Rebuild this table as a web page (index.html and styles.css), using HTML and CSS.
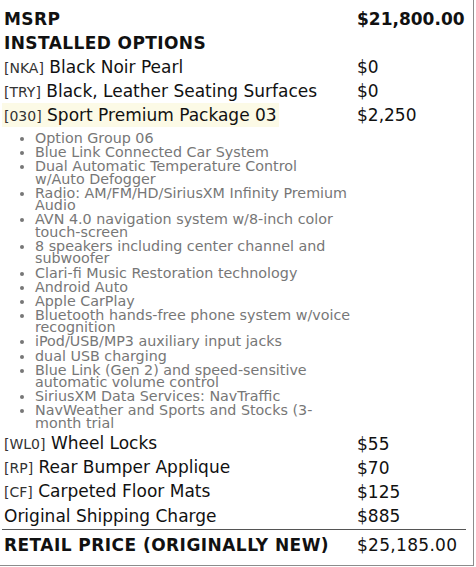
FILE: index.html
```html
<!DOCTYPE html>
<html>
<head>
<meta charset="utf-8">
<link rel="stylesheet" href="styles.css">
</head>
<body>
<div class="sheet">
  <div class="table">
    <div class="row strong"><div class="label">MSRP</div><div class="price">$21,800.00</div></div>
    <div class="row strong"><div class="label">INSTALLED OPTIONS</div><div class="price"></div></div>
    <div class="row"><div class="label"><span class="code">[NKA]</span> Black Noir Pearl</div><div class="price">$0</div></div>
    <div class="row"><div class="label"><span class="code">[TRY]</span> Black, Leather Seating Surfaces</div><div class="price">$0</div></div>
    <div class="row"><div class="label"><span class="hl"><span class="code">[030]</span> Sport Premium Package 03</span></div><div class="price">$2,250</div></div>
    <div class="details">
      <ul class="features">
        <li>Option Group 06</li>
        <li>Blue Link Connected Car System</li>
        <li>Dual Automatic Temperature Control w/Auto Defogger</li>
        <li>Radio: AM/FM/HD/SiriusXM Infinity Premium Audio</li>
        <li>AVN 4.0 navigation system w/8-inch color touch-screen</li>
        <li>8 speakers including center channel and subwoofer</li>
        <li>Clari-fi Music Restoration technology</li>
        <li>Android Auto</li>
        <li>Apple CarPlay</li>
        <li>Bluetooth hands-free phone system w/voice recognition</li>
        <li>iPod/USB/MP3 auxiliary input jacks</li>
        <li>dual USB charging</li>
        <li>Blue Link (Gen 2) and speed-sensitive automatic volume control</li>
        <li>SiriusXM Data Services: NavTraffic</li>
        <li>NavWeather and Sports and Stocks (3-month trial</li>
      </ul>
    </div>
    <div class="row"><div class="label"><span class="code">[WL0]</span> Wheel Locks</div><div class="price">$55</div></div>
    <div class="row"><div class="label"><span class="code">[RP]</span> Rear Bumper Applique</div><div class="price">$70</div></div>
    <div class="row"><div class="label"><span class="code">[CF]</span> Carpeted Floor Mats</div><div class="price">$125</div></div>
    <div class="row"><div class="label">Original Shipping Charge</div><div class="price">$885</div></div>
    <div class="row total"><div class="label">RETAIL PRICE (ORIGINALLY NEW)</div><div class="price">$25,185.00</div></div>
  </div>
</div>
</body>
</html>
```
FILE: styles.css
```css
html, body {
  margin: 0;
  padding: 0;
  background: #fff;
}
body {
  font-family: "DejaVu Sans", "Liberation Sans", sans-serif;
  color: #111;
}
.sheet {
  box-sizing: border-box;
  width: 474px;
  height: 566px;
  padding-top: 7px;
  border-right: 1px solid #8c8c8c;
  border-bottom: 1px solid #8c8c8c;
}
.table {
  margin-left: 2px;
  width: 464px;
}
.row {
  display: grid;
  grid-template-columns: 353px 111px;
  height: 24px;
  align-items: center;
  font-size: 17px;
  line-height: 20px;
}
.label, .price {
  padding: 0 2px;
  white-space: nowrap;
}
.strong .label {
  font-weight: bold;
  letter-spacing: 0.4px;
}
.strong .price {
  font-weight: bold;
}
.code {
  font-size: 14px;
  color: #333;
  letter-spacing: 0;
}
.hl {
  display: inline-block;
  margin-left: -2px;
  padding: 2px 2px 1px;
  background: #fcfae6;
}
.details {
  width: 353px;
}
.features {
  margin: 0;
  padding: 5px 4px 1px 33px;
  font-size: 14.3px;
  line-height: 12.5px;
  color: #777;
}
.features li {
  padding-bottom: 1.6px;
}
.total {
  margin-top: 1px;
  border-top: 1px solid #555;
  height: 27px;
  padding-top: 4px;
  box-sizing: border-box;
}
.total .label {
  font-weight: bold;
  letter-spacing: 0.45px;
}
.total .price {
  letter-spacing: 0.3px;
}
```
